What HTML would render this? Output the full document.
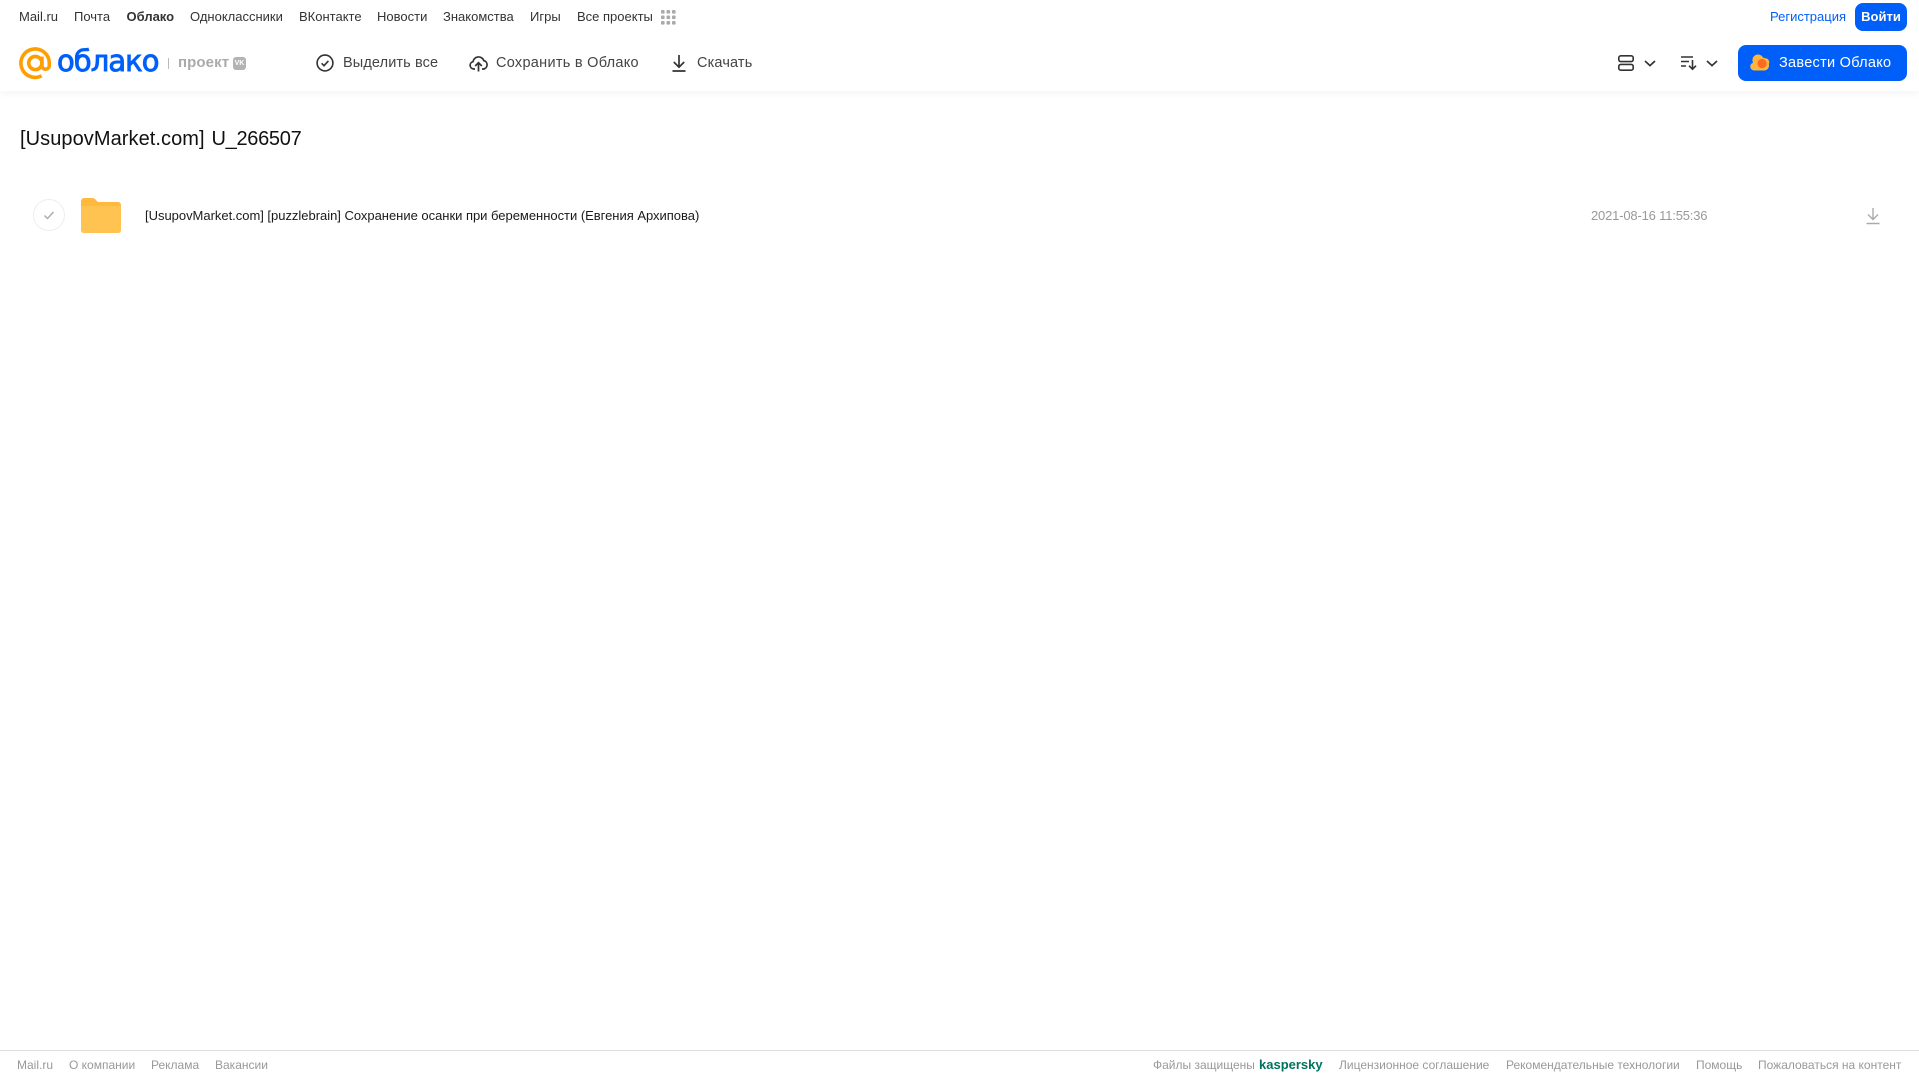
<!DOCTYPE html>
<html lang="ru"><head><meta charset="utf-8"><title>Облако</title>
<style>
html,body{margin:0;padding:0;background:#fff;width:1919px;height:1079px;overflow:hidden}
body{position:relative;font-family:"Liberation Sans",Arial,sans-serif;color:#333}
.t{position:absolute;white-space:nowrap;line-height:20px;height:20px}
.n{top:7px;font-size:13px;color:#333}
.b{top:53px;font-size:14.5px;color:#444}
.f{top:1055px;font-size:12px;color:#999}
svg{position:absolute;overflow:visible}
#hd{position:absolute;left:0;top:0;width:1919px;height:91px;background:#fff;box-shadow:0 2px 8px rgba(0,0,0,.05)}
</style></head><body>
<div id="hd"></div>
<span class="t n" style="left:19px">Mail.ru</span>
<span class="t n" style="left:74px">Почта</span>
<span class="t n" style="left:126.5px;font-weight:bold">Облако</span>
<span class="t n" style="left:190px">Одноклассники</span>
<span class="t n" style="left:299px">ВКонтакте</span>
<span class="t n" style="left:377px">Новости</span>
<span class="t n" style="left:443px">Знакомства</span>
<span class="t n" style="left:530px">Игры</span>
<span class="t n" style="left:577px">Все проекты</span>
<svg style="left:661px;top:10px" width="15" height="15" fill="#aaa"><rect x="0" y="0" width="3.6" height="3.6" rx="1"/><rect x="5.5" y="0" width="3.6" height="3.6" rx="1"/><rect x="11" y="0" width="3.6" height="3.6" rx="1"/><rect x="0" y="5.5" width="3.6" height="3.6" rx="1"/><rect x="5.5" y="5.5" width="3.6" height="3.6" rx="1"/><rect x="11" y="5.5" width="3.6" height="3.6" rx="1"/><rect x="0" y="11" width="3.6" height="3.6" rx="1"/><rect x="5.5" y="11" width="3.6" height="3.6" rx="1"/><rect x="11" y="11" width="3.6" height="3.6" rx="1"/></svg>

<svg style="left:19px;top:47px" width="33" height="33" viewBox="0 0 33 33" fill="none" stroke="#ff9e00" stroke-width="3.6"><circle cx="16.3" cy="16" r="6.6"/><path d="M22.9 9.6V18.5a3.6 3.6 0 0 0 7.4 0V16A14.2 14.2 0 1 0 22.6 28.8"/></svg>
<span class="t" style="left:57px;top:45px;height:32px;line-height:32px;font-size:29px;color:#005ff9;font-family:'DejaVu Sans',sans-serif;letter-spacing:-.95px;-webkit-text-stroke:.9px #005ff9">облако</span>
<div style="position:absolute;left:168px;top:58px;width:1px;height:11px;background:#bbb"></div>
<span class="t" style="left:178px;top:53px;font-size:15px;color:#aaa;font-weight:bold;letter-spacing:.1px">проект</span>
<div style="position:absolute;left:233px;top:57px;width:13px;height:13px;border-radius:3px;background:#b3b3b3;color:#fff;font-size:7px;font-weight:bold;line-height:13px;text-align:center">VK</div>

<svg style="left:316px;top:54px" width="18" height="18" viewBox="0 0 18 18" fill="none" stroke="#333" stroke-width="1.6"><circle cx="9" cy="9" r="7.9"/><path d="M5.6 9.3l2.4 2.4 4.4-4.8"/></svg>
<span class="t b" style="left:343px;letter-spacing:.12px">Выделить все</span>
<svg style="left:469px;top:54px" width="19" height="18" viewBox="0 0 19 18" fill="none" stroke="#333" stroke-width="1.7"><path d="M6 15H4.6A3.7 3.7 0 0 1 4 7.7 5.6 5.6 0 0 1 14.8 6.6 4.3 4.3 0 0 1 14.6 15H13"/><path d="M9.5 17.5V9M6.2 12l3.3-3.3L12.8 12"/></svg>
<span class="t b" style="left:496px;letter-spacing:.28px">Сохранить в Облако</span>
<svg style="left:671px;top:54px" width="16" height="18" viewBox="0 0 16 18" fill="none" stroke="#333" stroke-width="1.7"><path d="M8 1v12M2.8 8l5.2 5.2L13.2 8M1.5 17h13"/></svg>
<span class="t b" style="left:697px;letter-spacing:.15px">Скачать</span>

<span class="t n" style="left:1770px;color:#005ff9">Регистрация</span>
<div style="position:absolute;left:1855px;top:3px;width:52px;height:28px;border-radius:8px;background:#005ff9;color:#fff;font-size:13px;font-weight:bold;line-height:27px;text-align:center">Войти</div>

<svg style="left:1618px;top:55px" width="16" height="16" viewBox="0 0 16 16" fill="none" stroke="#333" stroke-width="1.6"><rect x=".8" y=".8" width="14.4" height="5.8" rx="2"/><rect x=".8" y="9.4" width="14.4" height="5.8" rx="2"/></svg>
<svg style="left:1644px;top:60px" width="12" height="7" viewBox="0 0 12 7" fill="none" stroke="#333" stroke-width="1.7"><path d="M1 1l5 4.6L11 1"/></svg>
<svg style="left:1681px;top:55px" width="16" height="16" viewBox="0 0 16 16" fill="none" stroke="#333" stroke-width="1.4"><path d="M0 2h12M0 6.5h8M0 11h5"/><path d="M11.5 5v9M8 10.7l3.5 3.5 3.5-3.5" stroke-width="1.6"/></svg>
<svg style="left:1706px;top:60px" width="12" height="7" viewBox="0 0 12 7" fill="none" stroke="#333" stroke-width="1.7"><path d="M1 1l5 4.6L11 1"/></svg>
<div style="position:absolute;left:1738px;top:45px;width:169px;height:36px;border-radius:8px;background:#005ff9"></div>
<svg style="left:1750px;top:54px" width="19" height="17" viewBox="0 0 19 17"><path d="M4 16.5a4 4 0 0 1-1-7.8A5.6 5.6 0 0 1 13 3.6a5 5 0 0 1 2 .6A4 4 0 0 1 18.8 10a5 5 0 0 1-4 6.5z" fill="#ffb53c"/><circle cx="12" cy="9.5" r="4.6" fill="#ff6a1f"/></svg>
<span class="t b" style="left:1779px;color:#fff;top:53px;letter-spacing:.28px">Завести Облако</span>

<span class="t" style="left:20px;top:127px;height:24px;line-height:24px;font-size:20px;color:#111;letter-spacing:.07px;word-spacing:1.2px">[UsupovMarket.com] <span style="letter-spacing:-.3px">U_266507</span></span>

<svg style="left:33px;top:199px" width="32" height="32" viewBox="0 0 32 32" fill="none"><circle cx="16" cy="16" r="15.5" stroke="#eee"/><path d="M11.5 16.5l3 3 6-6.5" stroke="#aaa" stroke-width="1.4"/></svg>
<svg style="left:81px;top:198px" width="40" height="35" viewBox="0 0 40 35"><path d="M0 3a3 3 0 0 1 3-3h8.5a4 4 0 0 1 3 1.5L17 4h20a3 3 0 0 1 3 3v25a3 3 0 0 1-3 3H3a3 3 0 0 1-3-3z" fill="#ffb93f"/><path d="M0 8h40v24a3 3 0 0 1-3 3H3a3 3 0 0 1-3-3z" fill="#ffc352"/></svg>
<span class="t" style="left:145px;top:206px;font-size:13px;color:#1a1a1a;letter-spacing:-.02px">[UsupovMarket.com] [puzzlebrain] Сохранение осанки при беременности (Евгения Архипова)</span>
<span class="t" style="left:1591px;top:206px;font-size:13px;color:#999;letter-spacing:-.18px">2021-08-16 11:55:36</span>
<svg style="left:1866px;top:207px" width="14" height="18" viewBox="0 0 14 18" fill="none" stroke="#aaa" stroke-width="1.4"><path d="M7 1v11M2 7.5l5 5 5-5M.5 16.5h13"/></svg>

<div style="position:absolute;left:0;top:1050px;width:1919px;height:1px;background:#ddd"></div>
<span class="t f" style="left:17px">Mail.ru</span>
<span class="t f" style="left:69px">О компании</span>
<span class="t f" style="left:151px">Реклама</span>
<span class="t f" style="left:215px">Вакансии</span>
<span class="t f" style="left:1153px">Файлы защищены</span>
<span class="t f" style="left:1259px;font-size:13px;font-weight:bold;color:#00735f">kaspersky</span>
<span class="t f" style="left:1339px">Лицензионное соглашение</span>
<span class="t f" style="left:1506px">Рекомендательные технологии</span>
<span class="t f" style="left:1696px">Помощь</span>
<span class="t f" style="left:1758px">Пожаловаться на контент</span>
</body></html>
